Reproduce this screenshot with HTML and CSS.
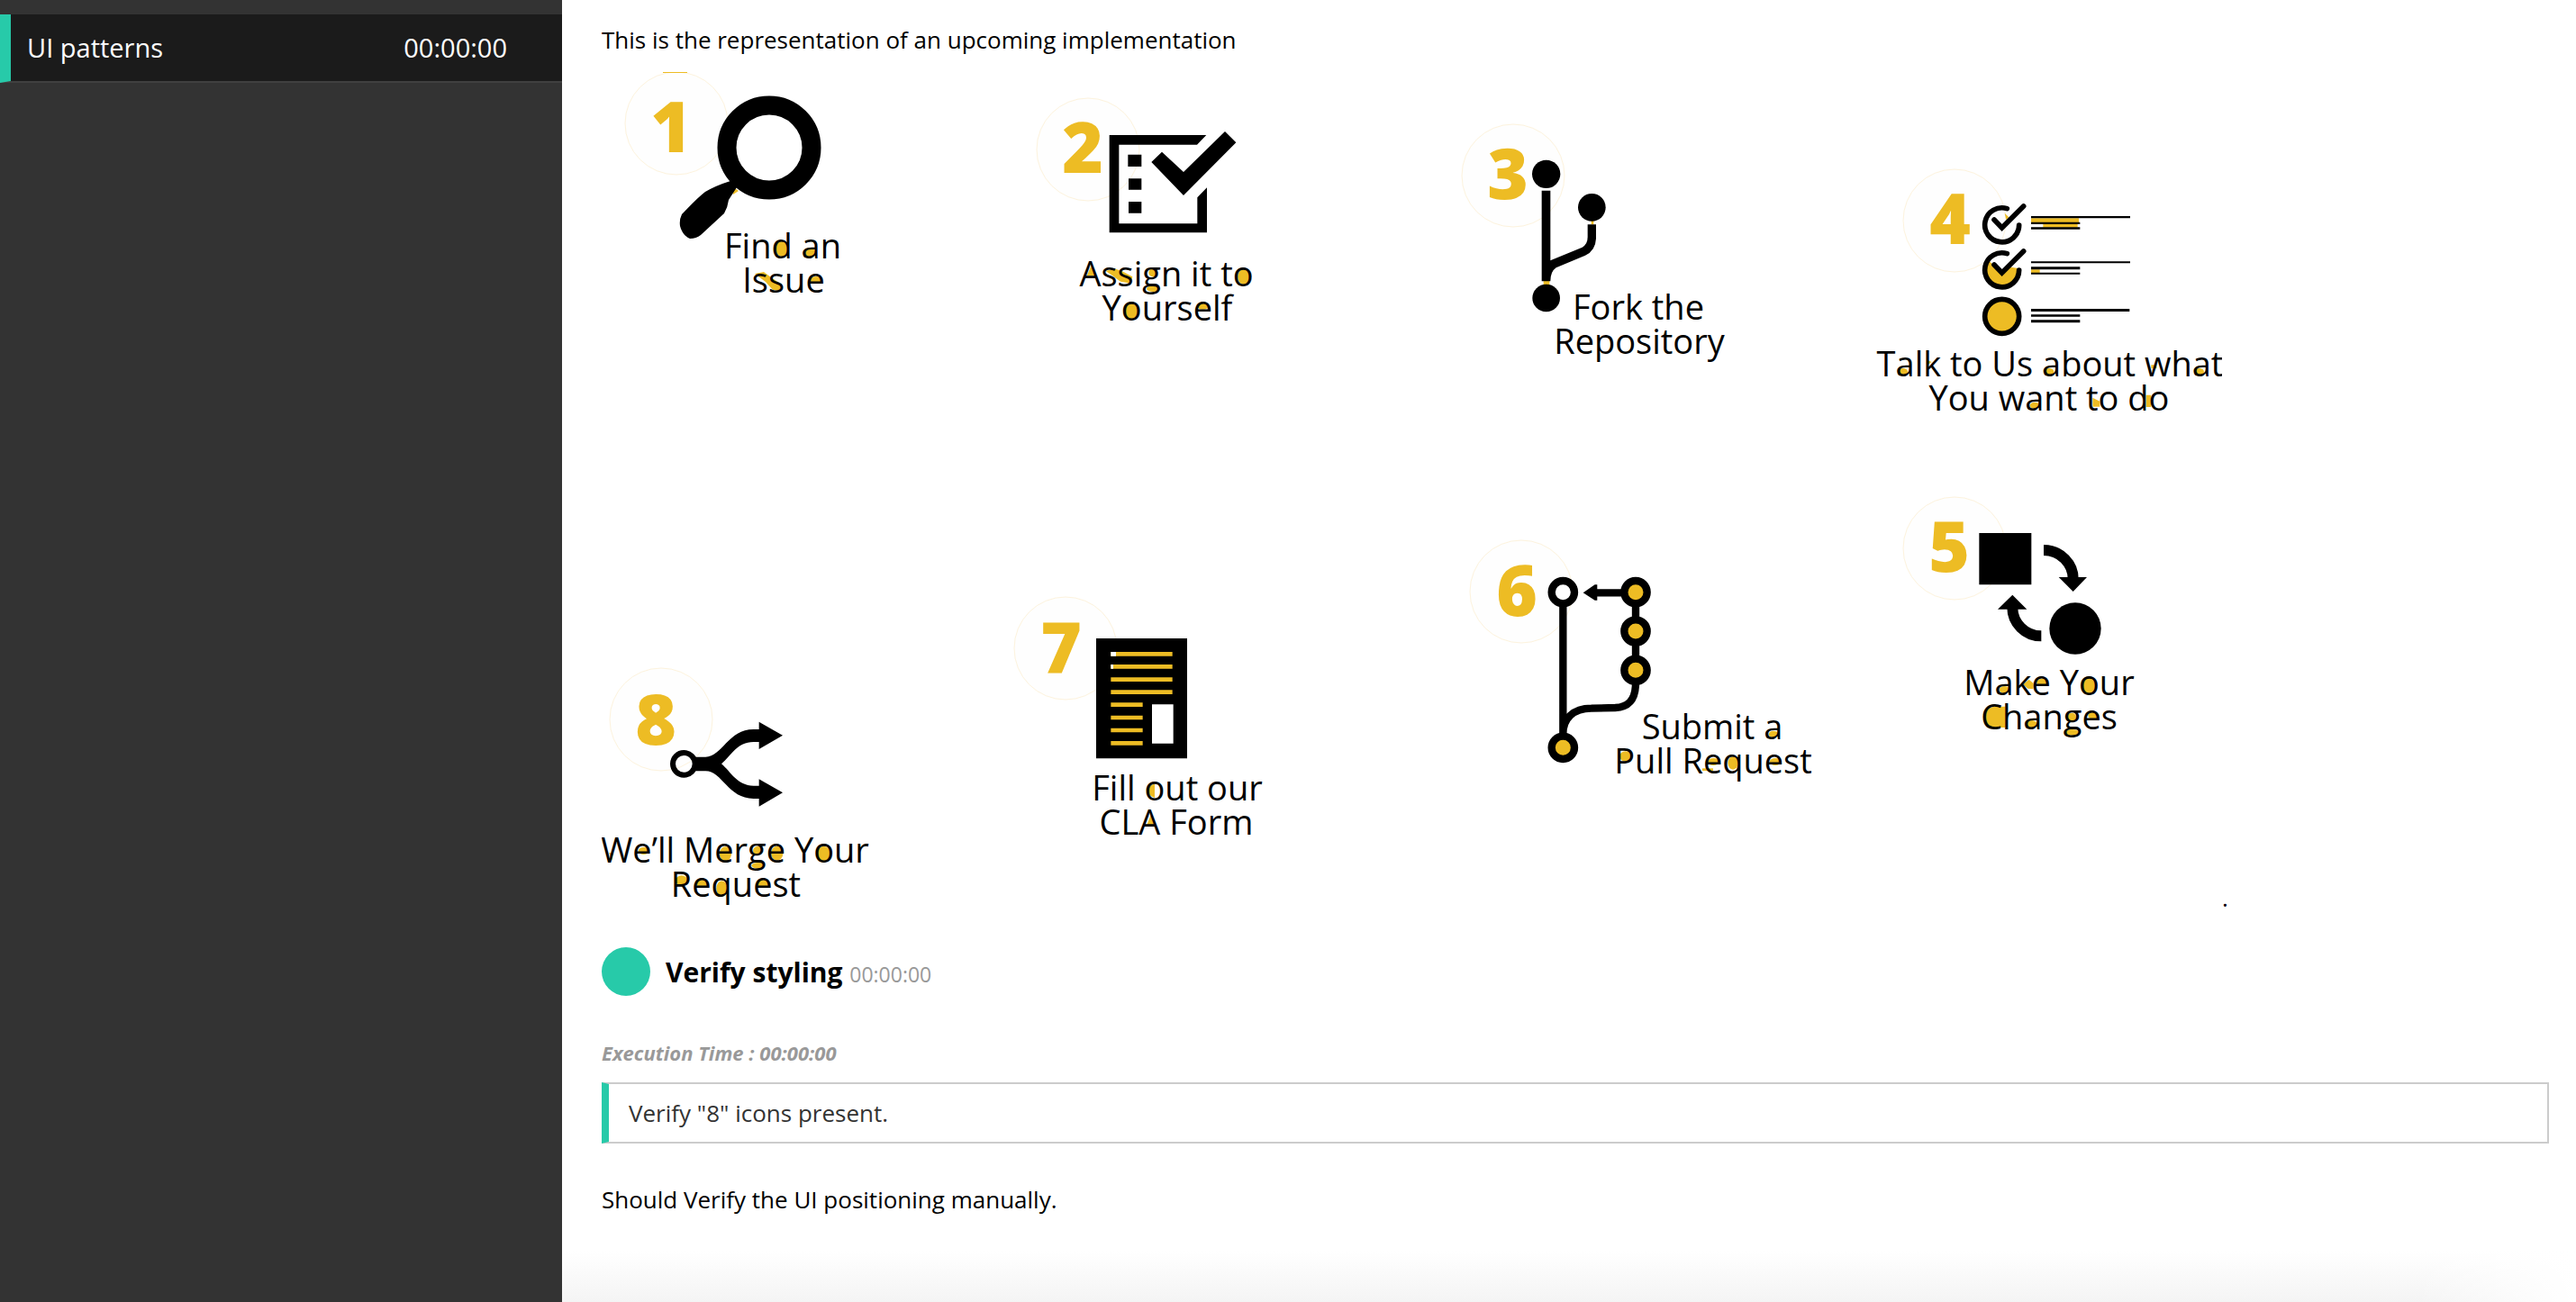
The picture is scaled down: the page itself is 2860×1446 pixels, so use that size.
FILE: index.html
```html
<!DOCTYPE html>
<html lang="en">
<head>
<meta charset="utf-8">
<title>UI patterns</title>
<link rel="stylesheet" href="styles.css">
</head>
<body>
<div class="layout">
  <nav class="sidebar">
    <a class="spec" href="#spec"><span>UI patterns</span><span>00:00:00</span></a>
  </nav>
  <main class="main" id="spec">
    <p class="intro">This is the representation of an upcoming implementation</p>
    <p class="figure"><svg class="diagram" viewBox="668 80 1799 927" role="img" aria-label="Contribution steps">
      <g class="halo">
        <circle cx="751" cy="137" r="57"/><circle cx="1208" cy="166" r="57"/>
        <circle cx="1680" cy="195" r="57"/><circle cx="2170" cy="245" r="57"/>
        <circle cx="2170" cy="609" r="57"/><circle cx="1689" cy="657" r="57"/>
        <circle cx="1183" cy="720" r="57"/><circle cx="734" cy="799" r="57"/>
      </g>
      <g class="num">
        <text x="745" y="169">1</text><text x="1202" y="192">2</text>
        <text x="1674" y="221">3</text><text x="2165" y="271">4</text>
        <text x="2164" y="635">5</text><text x="1684" y="684">6</text>
        <text x="1178" y="747">7</text><text x="728" y="827">8</text>
      </g>

      <!-- 1: magnifier -->
      <g>
        <path class="gold" d="M736 80h27v1h-27zM812 206l8 6-6 4z"/>
        <circle class="line" cx="854" cy="164" r="47" stroke-width="21"/>
        <path d="M811 201Q795 206 783 213Q775 219 757 238Q754 244 755 251Q758 262 766 265Q773 265 778 261L804 237Q808 230 809 222L818 208Z"/>
        <g class="gold"><ellipse cx="868" cy="276" rx="7" ry="9"/><ellipse cx="900" cy="281" rx="6" ry="5"/><path d="M838 304l10-2 8 6 12 8-2 7-8-1-8-9z"/><ellipse cx="906" cy="311" rx="7" ry="4"/></g>
      </g>

      <!-- 2: checklist -->
      <svg x="1110" y="90" width="320" height="290" viewBox="0 0 960 870">
        <path d="M365 180H688L657 212H397V475H658V388L690 355V505H365Z"/>
        <path d="M427 245h45v40h-45zM429 325h43v37h-43zM429 402h43v38h-43z"/>
        <path d="M505 270L540 236L612 303L750 168L787 205L612 381Z"/>
        <g class="gold"><path d="M303 618L290 649H318ZM352 632L385 626L405 632L442 652L436 674L402 668L375 648Z"/><ellipse cx="510" cy="638" rx="14" ry="14"/><ellipse cx="511" cy="692" rx="22" ry="10"/><ellipse cx="813" cy="652" rx="21" ry="26"/><ellipse cx="437" cy="767" rx="21" ry="26"/><ellipse cx="676" cy="749" rx="19" ry="12"/></g>
      </svg>

      <!-- 3: fork -->
      <svg x="1600" y="120" width="340" height="300" viewBox="0 0 1020 900">
        <path class="gold" d="M341 576h20v14h-20zM500 374h8v14h-8z"/>
        <circle cx="350" cy="220" r="47"/><circle cx="502" cy="331" r="46"/><circle cx="350" cy="633" r="46"/>
        <path d="M335 275h29v302h-29zM364 508L470 464Q488 454 488 430V388H516V435Q514 476 480 491L383 532Q364 545 364 577Z"/>
      </svg>

      <!-- 4: task list -->
      <svg x="2060" y="170" width="430" height="310" viewBox="0 0 1290 930">
        <g class="gold"><path d="M497 200l14 14-9 8zM585 217h159v15H585zM625 236h115v12H625zM585 388h29v12h-29zM440 355l48 45 30-20 30 5a58 58 0 0 1-108 25 60 60 0 0 1 0-55z"/><circle cx="488" cy="544" r="52"/></g>
        <g class="line" stroke-width="17" stroke-linecap="round">
          <path d="M505 185A57 57 0 1 0 545 240M462 222L488 249L560 177"/>
          <path d="M505 335A57 57 0 1 0 545 390M462 372L488 399L560 327"/>
          <circle cx="488" cy="544" r="57"/>
        </g>
        <path d="M585 210h330v7H585zM585 230h163v7H585zM585 247h163v7H585zM585 361h330v6H585zM585 379h163v9H585zM585 398h163v6H585zM585 519h328v9H585zM585 538h163v7H585zM585 556h163v9H585z"/>
        <g class="gold"><ellipse cx="158" cy="728" rx="16" ry="11"/><ellipse cx="645" cy="728" rx="16" ry="11"/><ellipse cx="1145" cy="728" rx="16" ry="11"/><ellipse cx="597" cy="841" rx="16" ry="11"/><path d="M790 815l24 12v18h-24zM968 806h16v40h-16zM985 706h18v12h-18zM240 690l14 6-14 10z"/></g>
      </svg>

      <!-- 5: change cycle -->
      <svg x="2080" y="530" width="420" height="300" viewBox="0 0 1260 900">
        <path d="M352 186h174v172H352z"/><circle cx="672" cy="504" r="86"/>
        <path class="line" stroke-width="36" d="M567 243C625 243 665 290 665 338M559 529C505 529 463 485 463 435"/>
        <path d="M617 333h94l-46 48zM414 440h97l-48-48z"/>
        <g class="gold"><ellipse cx="436" cy="708" rx="17" ry="12"/><path d="M498 690l20-16 14 12v20l-18-2z"/><ellipse cx="562" cy="683" rx="19" ry="12"/><ellipse cx="717" cy="696" rx="22" ry="27"/><path d="M440 764H400Q368 772 368 798Q370 830 404 834H440Z"/><ellipse cx="527" cy="822" rx="17" ry="12"/><ellipse cx="660" cy="800" rx="15" ry="15"/><ellipse cx="661" cy="850" rx="22" ry="10"/><ellipse cx="733" cy="794" rx="18" ry="12"/></g>
      </svg>

      <!-- 6: pull request -->
      <svg x="1610" y="580" width="430" height="300" viewBox="0 0 1290 900">
        <path class="line" stroke-width="25" d="M376 270V710M618 270V500M618 535C618 596 590 616 550 618L470 620C410 620 376 655 376 705M485 235H580"/>
        <path d="M443 235L482 208H490V260H482Z"/>
        <circle class="ring open" cx="376" cy="233" r="38"/><circle class="ring" cx="618" cy="233" r="38"/>
        <circle class="ring" cx="618" cy="363" r="38"/><circle class="ring" cx="618" cy="493" r="38"/>
        <circle class="ring" cx="376" cy="751" r="38"/>
        <g class="gold"><ellipse cx="1077" cy="706" rx="16" ry="11"/><ellipse cx="584" cy="780" rx="20" ry="17"/><ellipse cx="877" cy="798" rx="19" ry="12"/><ellipse cx="942" cy="802" rx="17" ry="22"/><ellipse cx="1083" cy="798" rx="19" ry="12"/><path d="M840 820h36v8h-36z"/></g>
      </svg>

      <!-- 7: form -->
      <svg x="1110" y="650" width="320" height="300" viewBox="0 0 960 900">
        <path d="M321 177h303v400H321z"/>
        <path class="gold" d="M370 222h205v14H370zM370 264h205v14H370zM370 307h205v14H370zM370 349h205v14H370zM370 391h106v14H370zM370 434h106v14H370zM370 476h106v14H370zM370 519h106v14H370z"/>
        <path class="paper" d="M507 397h71v130h-71zM370 222h17v14h-17zM370 264h8v14h-8z"/>
        <path class="gold" d="M516 662V708Q494 702 494 685Q496 664 516 662ZM503 765L490 799H517Z"/>
      </svg>

      <!-- 8: merge -->
      <svg x="650" y="720" width="340" height="300" viewBox="0 0 1020 900">
        <circle class="line" cx="328" cy="385" r="37" stroke-width="18"/>
        <path d="M366 362H400C455 362 475 270 560 270H578V245L657 290L578 336V312H560C505 312 485 358 453 385C485 412 505 458 560 458H578V436L657 481L578 527V501H560C475 501 455 409 400 409H366Z"/>
        <g class="gold"><path d="M78 680l14 4-4 24z"/><ellipse cx="194" cy="675" rx="18" ry="12"/><ellipse cx="466" cy="685" rx="20" ry="24"/><ellipse cx="573" cy="675" rx="15" ry="15"/><ellipse cx="575" cy="724" rx="22" ry="10"/><ellipse cx="638" cy="683" rx="20" ry="24"/><ellipse cx="793" cy="686" rx="22" ry="27"/><ellipse cx="320" cy="774" rx="20" ry="17"/><ellipse cx="388" cy="784" rx="19" ry="12"/><ellipse cx="454" cy="801" rx="18" ry="26"/><ellipse cx="590" cy="784" rx="19" ry="12"/></g>
      </svg>

      <g class="caption">
        <text x="869" y="287">Find an</text><text x="870" y="325">Issue</text>
        <text x="1295" y="318">Assign it to</text><text x="1296" y="356">Yourself</text>
        <text x="1819" y="355">Fork the</text><text x="1820" y="393">Repository</text>
        <text x="2276" y="418">Talk to Us about what</text><text x="2275" y="456">You want to do</text>
        <text x="2275" y="772">Make Your</text><text x="2275" y="810">Changes</text>
        <text x="1901" y="821">Submit a</text><text x="1902" y="859">Pull Request</text>
        <text x="1307" y="889">Fill out our</text><text x="1306" y="927">CLA Form</text>
        <text x="816" y="958">We’ll Merge Your</text><text x="817" y="996">Request</text>
      </g>
    </svg>.</p>
    <div class="scenario">
      <span class="status"></span>
      <h1 class="title">Verify styling <span class="time">00:00:00</span></h1>
    </div>
    <p class="execution">Execution Time : 00:00:00</p>
    <div class="step">Verify "8" icons present.</div>
    <p class="note">Should Verify the UI positioning manually.</p>
  </main>
</div>
</body>
</html>
```
FILE: styles.css
```css
* { box-sizing: border-box; }

body {
  margin: 0;
  font-family: "Open Sans", "Noto Sans", sans-serif;
  font-size: 26px;
  line-height: 36px;
  color: #000;
  background: #fff;
}

p, h1 { margin: 0; }

.layout { display: flex; min-height: 100vh; }

.sidebar {
  flex: 0 0 624px;
  padding-top: 16px;
  background: #333;
}

.spec {
  display: flex;
  justify-content: space-between;
  height: 76px;
  padding: 19px 61px 0 18px;
  border-left: 12px solid #27caa9;
  border-bottom: 2px solid #404040;
  background: #1b1b1b;
  color: #fff;
  font-size: 29px;
  font-weight: 500;
  text-decoration: none;
}

.main {
  flex: 1;
  min-width: 0;
  padding: 26px 30px 60px 44px;
  background:
    linear-gradient(to right, transparent 92%, #fff),
    linear-gradient(to top, #f4f4f4, #fff 56px);
}

.figure { margin-top: 18px; }

.diagram { width: 1799px; max-width: 98%; vertical-align: baseline; }

.halo { fill: #fefefe; stroke: #fdf3dd; stroke-width: 1; }
.gold { fill: #edbc24; }
.paper { fill: #fff; }
.line { fill: none; stroke: #000; }
.ring { fill: #edbc24; stroke: #000; stroke-width: 25; }
.open { fill: #fff; }

.num {
  fill: #edbc24;
  font-size: 78px;
  font-weight: 800;
  text-anchor: middle;
}

.caption { font-size: 38px; text-anchor: middle; }

.scenario {
  display: flex;
  align-items: center;
  gap: 17px;
  margin-top: 37px;
}

.status {
  width: 54px;
  height: 54px;
  border-radius: 50%;
  background: #27caa9;
}

.title { padding-top: 4px; font-size: 30px; line-height: 40px; }
.time { color: #999; font-size: 23px; font-weight: 400; }

.execution {
  margin-top: 45px;
  color: #999;
  font-size: 22px;
  font-style: italic;
  font-weight: 700;
}

.step {
  margin-top: 15px;
  padding: 14px 22px;
  border: 2px solid #ccc;
  border-left: 8px solid #27caa9;
  color: #333;
}

.note { margin-top: 44px; }
```
